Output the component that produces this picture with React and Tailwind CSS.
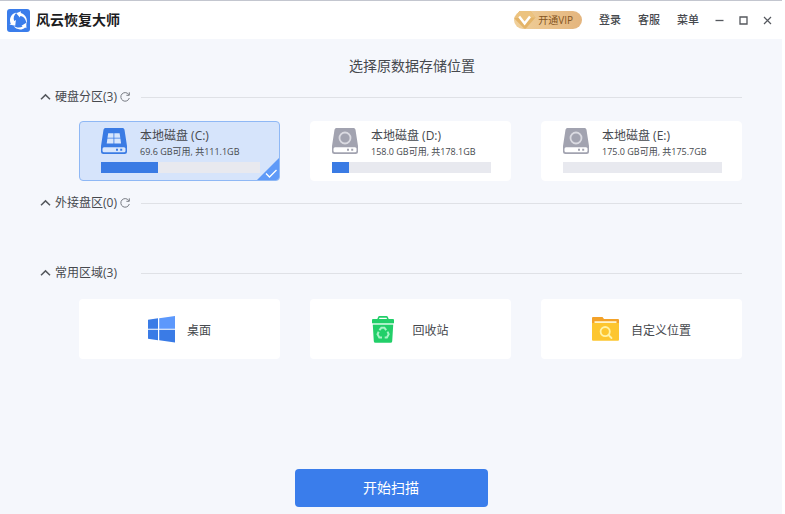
import { useState } from 'react';

const disks = [
  { id: 'C', name: '本地磁盘 (C:)', info: '69.6 GB可用, 共111.1GB', used: 36, system: true },
  { id: 'D', name: '本地磁盘 (D:)', info: '158.0 GB可用, 共178.1GB', used: 11 },
  { id: 'E', name: '本地磁盘 (E:)', info: '175.0 GB可用, 共175.7GB', used: 0 },
];

const LogoIcon = () => (
  <svg viewBox="0 0 23 23" className="h-[23px] w-[23px]" aria-hidden="true">
    <rect width="23" height="23" rx="3" fill="#3a7deb" />
    <g fill="#fff">
      <path d="M9.500 3.600C5.500 4.400 2.900 7.600 3 11.500c0 1.300.3 2.300.8 3.300L2.400 15.500l5.800 1.300L8.900 11 7.200 11.900C6 9.300 7 6 9.500 3.600z" />
      <path d="M9.200 4.200l4.800-2-.3 1.700c4 1.100 6.500 4.500 6.200 8.700-.1 1-.3 1.700-.6 2.400.1-4.300-2.400-7.400-6-7.900l-.4 1.500z" />
      <path d="M19.300 13.700l-4.800 3 1.200.8c-2.700 1.700-6.600 1.500-9.300-.9 2.500 4.400 8.400 5.100 11.700 1.800l1.300.8z" />
    </g>
  </svg>
);

const VipIcon = () => (
  <svg viewBox="0 0 22 18" className="h-[18px] w-[22px]" aria-hidden="true">
    <path d="M5.500 0h11L21.500 6.500l-9 10.300a2 2 0 0 1-3 0L.3 7.500z" fill="#e4b468" />
    <path d="M5.500 0h11L21.500 6.500h-4L11 13.500 4.500 6.500l-4 .8z" fill="#ecc380" />
    <path d="M5.200 5.600l5.400 6.900 5.400-6.900" fill="none" stroke="#fff" strokeWidth="2.400" />
  </svg>
);

const ChevronIcon = ({ open }) => (
  <svg viewBox="0 0 11 8" className={`h-2 w-[11px] ${open ? '' : 'rotate-180'}`} fill="none" aria-hidden="true">
    <path d="M1 6.200L5.500 1.900 10 6.200" stroke="#55585d" strokeWidth="1.500" />
  </svg>
);

const RefreshIcon = () => (
  <svg viewBox="0 0 12 12" className="h-3 w-3" fill="none" stroke="#777b83" aria-hidden="true">
    <path d="M9.900 3.800A4.300 4.300 0 1 0 10.300 7" />
    <path d="M10.300 1.300v3H7.400" />
  </svg>
);

const DiskIcon = ({ system }) => {
  const color = system ? '#3a7be4' : '#a2a3b0';
  const face = system ? '#d8e6fc' : '#fff';

  return (
    <svg viewBox="0 0 26 26" className="h-[26px] w-[26px]" aria-hidden="true">
      <path d="M4.500 0h17a2 2 0 0 1 2 1.700L26 18v5.500a2.500 2.500 0 0 1-2.500 2.500h-21A2.500 2.500 0 0 1 0 23.500V18L2.500 1.700A2 2 0 0 1 4.500 0z" fill={color} />
      <rect x="1.500" y="19.200" width="23" height="5" rx="1.500" fill={face} />
      <path d="M15 20.800h2v2h-2zM19.200 20.800h2v2h-2z" fill={color} />
      {system ? (
        <path
          d="M7.200 5.200h5.300v4.500H6.500zM13.300 5.200h5.300l.7 4.500h-6zM6.400 10.500h6.100v5H5.700zM13.300 10.500h6.100l.7 5h-6.800z"
          fill="#d8e6fc"
        />
      ) : (
        <circle cx="13" cy="10" r="5.500" fill="#a2a3b0" stroke="#dadae1" strokeWidth="1.800" />
      )}
    </svg>
  );
};

const DesktopIcon = () => (
  <svg viewBox="0 0 27 27" className="h-[27px] w-[27px]" aria-hidden="true">
    <path d="M0 3.800l10-1.500v10.500H0zM0 13.800h10v10.400L0 22.800zM11.200 13.800H27V26.500l-15.800-2.200z" fill="#3a7be6" />
    <path d="M11.200 2.200L27 0v12.800H11.200z" fill="#5c98fc" />
  </svg>
);

const RecycleIcon = () => (
  <svg viewBox="0 0 22 27" className="h-[27px] w-[22px]" aria-hidden="true">
    <path d="M1 3h4.300L6 1.200A1.800 1.800 0 0 1 7.600 0h6.800a1.800 1.800 0 0 1 1.600 1.200l.7 1.800H21a1 1 0 0 1 1 1v3.200H0V4a1 1 0 0 1 1-1zM7 3h8l-.5-1.300h-7z" fill="#22cf69" />
    <path d="M.8 7.200h20.400V9H.8z" fill="#a7efc4" />
    <path d="M.8 9h20.400l-1 16.200a1.700 1.700 0 0 1-1.700 1.600h-15a1.700 1.700 0 0 1-1.700-1.600z" fill="#22cf69" />
    <g fill="none" stroke="#a7f3c6" strokeWidth="2">
      <path d="M7.400 14.200l2-2.400h3l1.800 2.300" />
      <path d="M15.500 15.600l1.200 2.700-1.800 3.200h-2.200" />
      <path d="M10 21.500H7.300L5.500 18.200l1.200-2.500" />
    </g>
  </svg>
);

const FolderIcon = () => (
  <svg viewBox="0 0 27 24" className="h-6 w-[27px]" aria-hidden="true">
    <path d="M1 0h9.500l1.500 2H26a1 1 0 0 1 1 1v9H0V1a1 1 0 0 1 1-1z" fill="#f3a229" />
    <path d="M2.500 4.200h22V8h-22z" fill="#fff3c9" />
    <path d="M0 6h27v16.800a1 1 0 0 1-1 1H1a1 1 0 0 1-1-1z" fill="#fdc62f" />
    <g fill="none" stroke="#fff3a8" strokeWidth="1.800">
      <circle cx="13.200" cy="14.600" r="4.600" />
      <path d="M16.500 18l3 3" strokeLinecap="round" />
    </g>
  </svg>
);

const SectionHeader = ({ title, open, onToggle, refresh }) => (
  <div className="flex h-5 items-center">
    <div className="flex w-[101px] shrink-0 items-center gap-[2px]">
      <button type="button" onClick={onToggle} aria-expanded={open} className="flex items-center gap-1 text-xs leading-5">
        <ChevronIcon open={open} />
        <span>{title}</span>
      </button>
      {refresh && (
        <button type="button" aria-label="刷新">
          <RefreshIcon />
        </button>
      )}
    </div>
    <div className="h-px flex-1 bg-[#dfe1e6]" />
  </div>
);

const DiskCard = ({ disk, selected, onSelect }) => (
  <button
    type="button"
    aria-pressed={selected}
    onClick={onSelect}
    className={`relative flex h-[60px] flex-col overflow-hidden rounded border pt-[6px] pr-[19px] pl-[21px] text-left ${
      selected ? 'border-[#8fb8f5] bg-[#d6e4fb]' : 'border-white bg-white'
    }`}
  >
    <div className="flex gap-[13px]">
      <DiskIcon system={disk.system} />
      <div className="whitespace-nowrap">
        <div className="text-xs leading-4">{disk.name}</div>
        <div className="text-[9px] leading-4">{disk.info}</div>
      </div>
    </div>
    <div className="mt-[2px] h-[11px] w-full bg-[#e8e9ef]">
      <div className="h-full bg-[#3a7be4]" style={{ width: `${disk.used}%` }} />
    </div>
    {selected && (
      <svg viewBox="0 0 22 22" className="absolute right-0 bottom-0 h-[22px] w-[22px]" aria-hidden="true">
        <path d="M22 0v22H0z" fill="#5f9af8" />
        <path d="M9 15.500l3.500 3.500 7-7" fill="none" stroke="#fff" strokeWidth="1.300" />
      </svg>
    )}
  </button>
);

const PlaceCard = ({ icon, children }) => (
  <button type="button" className="flex h-[60px] items-center justify-center gap-3 rounded bg-white">
    {icon}
    <span className="pt-1">{children}</span>
  </button>
);

const App = () => {
  const [selected, setSelected] = useState('C');
  const [open, setOpen] = useState({ disks: true, external: true, common: true });

  const toggle = (key) => setOpen({ ...open, [key]: !open[key] });

  return (
    <div className="min-h-screen bg-white pr-[3px] font-['Open_Sans','Noto_Sans_CJK_SC',sans-serif] text-[#46494e]">
      <div className="flex min-h-screen flex-col bg-[#f5f7fc]">
        {/* Title bar */}
        <header className="flex h-[39px] items-center justify-between border-t border-[#c3c6cf] bg-white pr-[10px] pl-[7px]">
          <div className="flex items-center gap-[6px]">
            <LogoIcon />
            <h1 className="text-sm font-bold text-[#1c1c1e]">风云恢复大师</h1>
          </div>
          <div className="flex items-center">
            <button
              type="button"
              className="mr-[17px] flex h-[18px] items-center gap-[2px] rounded-full bg-linear-to-r from-[#f0d09a] to-[#e4b57e] pr-[9px] text-[10px] leading-4 text-[#84551f]"
            >
              <VipIcon />
              开通VIP
            </button>
            <nav className="flex gap-[17px] text-[11px] leading-4 font-medium">
              <button type="button">登录</button>
              <button type="button">客服</button>
              <button type="button">菜单</button>
            </nav>
            <div className="ml-4 flex items-center gap-[15px] text-[#55585e]">
              <button type="button" aria-label="最小化">
                <svg viewBox="0 0 9 9" className="h-[9px] w-[9px]" fill="none" stroke="currentColor">
                  <path d="M.5 4.500h8" strokeWidth="1.300" />
                </svg>
              </button>
              <button type="button" aria-label="最大化">
                <svg viewBox="0 0 9 9" className="h-[9px] w-[9px]" fill="none" stroke="currentColor">
                  <path d="M1 1h7v7H1z" strokeWidth="1.300" />
                </svg>
              </button>
              <button type="button" aria-label="关闭">
                <svg viewBox="0 0 9 9" className="h-[9px] w-[9px]" fill="none" stroke="currentColor">
                  <path d="M1 1l7 7M8 1L1 8" strokeWidth="1.200" />
                </svg>
              </button>
            </div>
          </div>
        </header>

        <main className="flex flex-col px-10 pt-[17px]">
          <h2 className="pl-[42px] text-center text-sm leading-5">选择原数据存储位置</h2>

          <section className="mt-[11px]">
            <SectionHeader title="硬盘分区(3)" open={open.disks} onToggle={() => toggle('disks')} refresh />
            {open.disks && (
              <div className="mt-[14px] grid grid-cols-3 gap-[30px] pl-[39px]">
                {disks.map((disk) => (
                  <DiskCard
                    key={disk.id}
                    disk={disk}
                    selected={selected === disk.id}
                    onSelect={() => setSelected(disk.id)}
                  />
                ))}
              </div>
            )}
          </section>

          <section className="mt-3">
            <SectionHeader title="外接盘区(0)" open={open.external} onToggle={() => toggle('external')} refresh />
            {open.external && <div className="h-[50px]" />}
          </section>

          <section>
            <SectionHeader title="常用区域(3)" open={open.common} onToggle={() => toggle('common')} />
            {open.common && (
              <div className="mt-4 grid grid-cols-3 gap-[30px] pl-[39px] text-xs">
                <PlaceCard icon={<DesktopIcon />}>桌面</PlaceCard>
                <button type="button" className="flex h-[60px] items-center justify-center gap-[18px] rounded bg-white">
                  <RecycleIcon />
                  <span className="pt-1">回收站</span>
                </button>
                <PlaceCard icon={<FolderIcon />}>自定义位置</PlaceCard>
              </div>
            )}
          </section>

          <button
            type="button"
            className="mt-[110px] h-[38px] w-[193px] self-center rounded bg-[#3a7deb] text-sm text-white"
          >
            开始扫描
          </button>
        </main>
      </div>
    </div>
  );
};

export default App;
